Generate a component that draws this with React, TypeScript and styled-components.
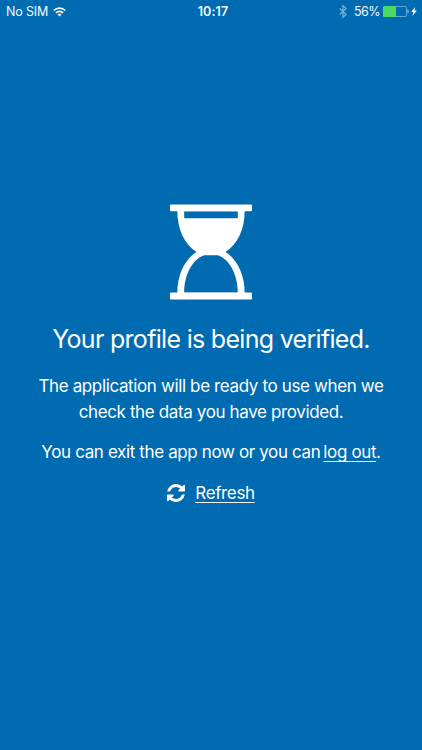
import React from "react";
import styled, { createGlobalStyle } from "styled-components";

const GlobalStyle = createGlobalStyle`
  *, *::before, *::after { box-sizing: border-box; }
  html, body, #root { height: 100%; }
  body {
    margin: 0;
    overflow: hidden;
    background: #006bb0;
    color: #fff;
    font-family: Inter, "Liberation Sans", sans-serif;
  }
`;

const Screen = styled.div`
  height: 750px;
  display: flex;
  flex-direction: column;
  background: #006bb0;
`;

const StatusBar = styled.header`
  height: 22px;
  flex: none;
  display: grid;
  grid-template-columns: 1fr auto 1fr;
  align-items: center;
  padding: 0 5px 0 6px;
  font-size: 12.5px;
  line-height: 22px;
  color: #f2f9ff;
`;

const StatusGroup = styled.div<{ $end?: boolean }>`
  display: flex;
  align-items: center;
  justify-content: ${({ $end }) => ($end ? "flex-end" : "flex-start")};
`;

const Carrier = styled.span`
  margin-right: 5px;
  padding-top: 1px;
  letter-spacing: -0.15px;
`;

const Clock = styled.time`
  padding: 1px 0 0 3px;
  font-weight: 600;
  font-size: 12.5px;
  letter-spacing: 0.1px;
`;

const Percent = styled.span`
  margin: 0 3px 0 7px;
  padding-top: 1px;
  letter-spacing: -0.5px;
`;

const Content = styled.main`
  display: flex;
  flex-direction: column;
  align-items: center;
  padding-top: 182px;
`;

const Title = styled.h1`
  margin: 19px 0 0;
  font-size: 25px;
  line-height: 40px;
  font-weight: 400;
  letter-spacing: -0.7px;
  white-space: nowrap;
`;

const Paragraph = styled.p<{ $gap: number }>`
  margin: ${({ $gap }) => $gap}px 0 0;
  font-size: 17px;
  line-height: 26px;
  font-weight: 400;
  letter-spacing: -0.37px;
  text-align: center;
  white-space: nowrap;
`;

const Link = styled.a<{ $inset?: number }>`
  margin-left: ${({ $inset = 0 }) => $inset}px;
  color: inherit;
  text-decoration: underline;
  text-decoration-thickness: 1px;
  text-underline-offset: 3px;
  text-decoration-skip-ink: none;
  cursor: pointer;
`;

const RefreshRow = styled.div`
  display: flex;
  align-items: center;
  gap: 10px;
  margin-top: 15px;
  font-size: 17px;
  line-height: 26px;
  font-weight: 400;
  letter-spacing: -0.37px;
`;

const WifiIcon = () => (
  <svg width="13" height="10" viewBox="0 0 13 10" fill="none" stroke="#fff" strokeWidth="1.7">
    <path d="M.8 3.5a8.1 8.1 0 0 1 11.4 0M2.9 5.8a5.1 5.1 0 0 1 7.2 0" />
    <path d="M6.5 9.6 4.5 7.5a2.9 2.9 0 0 1 4 0Z" fill="#fff" stroke="none" />
  </svg>
);

const BluetoothIcon = () => (
  <svg width="8" height="13" viewBox="0 0 8 13" fill="none" stroke="#75b3dc" strokeWidth="1.2">
    <path d="m.7 3.5 6.400 6L4 12.300V.7l3.100 2.800-6.400 6" />
  </svg>
);

const BatteryIcon = () => (
  <svg width="28" height="11" viewBox="0 0 28 11">
    <rect x=".5" y=".5" width="23" height="10" rx="1.5" fill="none" stroke="#62a9d8" />
    <path d="M1.5 0H13v11H1.5A1.5 1.5 0 0 1 0 9.500v-8A1.5 1.500 0 0 1 1.500 0Z" fill="#4cd964" />
    <path d="M24.500 3.500q1.200.4 1.200 2t-1.200 2Z" fill="#a9d0eb" />
  </svg>
);

const BoltIcon = () => (
  <svg width="6" height="9" viewBox="0 0 6 9" fill="#fff">
    <path d="M4 0 .2 5h2.100L1.500 9 5.800 3.600H3.500Z" />
  </svg>
);

const HourglassIcon = () => (
  <svg width="82" height="96" viewBox="0 0 82 96" fill="#fff">
    <rect x="0" y="0.5" width="82" height="6.8" rx="1" />
    <rect x="0" y="88.6" width="82" height="6.8" rx="1" />
    <path
      fillRule="evenodd"
      d="M7.300 7H74.700C74.700 25 67.500 40.500 55.500 48C67.500 55.500 74.700 71 74.700 89H7.300C7.300 71 14.500 55.500 26.500 48C14.500 40.500 7.300 25 7.300 7ZM14.200 7.300V14.200H67.800V7.300ZM14.200 88.700H67.800C67.800 70.500 59.500 55.500 48 51.300H34C22.500 55.500 14.200 70.500 14.200 88.700Z"
    />
  </svg>
);

const RefreshIcon = () => (
  <svg width="18" height="18" viewBox="0 0 1536 1536" fill="#fff">
    <path d="M1511 928q0 5-1 7-64 268-268 434.500t-478 166.500q-146 0-282.500-55t-243.500-157l-129 129q-19 19-45 19t-45-19-19-45v-448q0-26 19-45t45-19h448q26 0 45 19t19 45-19 45l-137 137q71 66 161 102t187 36q134 0 250-65t186-179q11-17 53-117 8-23 30-23h192q13 0 22.500 9.500t9.500 22.500zm25-800v448q0 26-19 45t-45 19h-448q-26 0-45-19t-19-45 19-45l138-138q-148-137-349-137-134 0-250 65t-186 179q-11 17-53 117-8 23-30 23h-199q-13 0-22.500-9.500t-9.500-22.500v-7q65-268 270-434.500t480-166.500q146 0 284 55.500t245 156.500l130-129q19-19 45-19t45 19 19 45z" />
  </svg>
);

export default function App() {
  return (
    <Screen>
      <GlobalStyle />
      <StatusBar>
        <StatusGroup>
          <Carrier>No SIM</Carrier>
          <WifiIcon />
        </StatusGroup>
        <Clock>10:17</Clock>
        <StatusGroup $end>
          <BluetoothIcon />
          <Percent>56%</Percent>
          <BatteryIcon />
          <BoltIcon />
        </StatusGroup>
      </StatusBar>
      <Content>
        <HourglassIcon />
        <Title>Your profile is being verified.</Title>
        <Paragraph $gap={14}>
          The application will be ready to use when we
          <br />
          check the data you have provided.
        </Paragraph>
        <Paragraph $gap={14}>
          You can exit the app now or you can
          <Link $inset={3}>log out</Link>.
        </Paragraph>
        <RefreshRow>
          <RefreshIcon />
          <Link>Refresh</Link>
        </RefreshRow>
      </Content>
    </Screen>
  );
}
